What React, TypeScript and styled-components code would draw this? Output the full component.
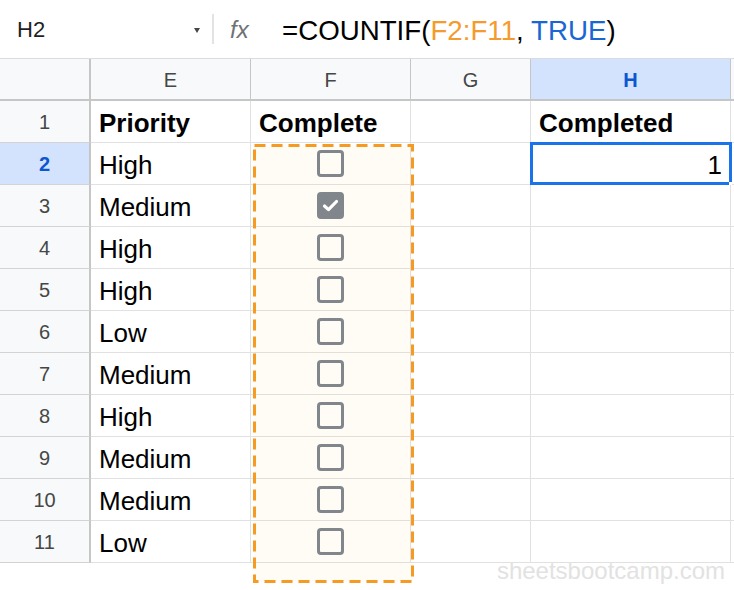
import React from "react";
import styled, { createGlobalStyle, css } from "styled-components";

const GlobalStyle = createGlobalStyle`
  html, body { margin: 0; padding: 0; background: #ffffff; }
  body { font-family: "Liberation Sans", Arial, sans-serif; }
  * { box-sizing: border-box; }
`;

const Page = styled.div`
  position: relative;
  width: 734px;
  height: 590px;
  overflow: hidden;
  background: #ffffff;
`;

const FormulaBar = styled.div`
  display: flex;
  align-items: center;
  height: 59px;
  border-bottom: 1px solid #dadce0;
`;

const NameBox = styled.div`
  width: 212px;
  display: flex;
  align-items: center;
  justify-content: space-between;
  padding: 2px 12px 0 17px;
  font-size: 22px;
  color: #1f1f1f;
`;

const Caret = styled.span`
  width: 0;
  height: 0;
  border-left: 3.5px solid transparent;
  border-right: 3.5px solid transparent;
  border-top: 5px solid #444746;
  margin-top: 0px;
`;

const Divider = styled.div`
  width: 2px;
  height: 30px;
  background: #e3e3e3;
`;

const Fx = styled.span`
  width: 68px;
  padding-left: 16px;
  padding-top: 2px;
  font-size: 24px;
  font-style: italic;
  color: #6f7275;
`;

const Formula = styled.span`
  font-size: 27.7px;
  color: #000000;
  margin-top: 4px;
`;

const Range = styled.span`
  color: #f59b2e;
`;

const Bool = styled.span`
  color: #1a66d2;
`;

const Grid = styled.div`
  display: grid;
  grid-template-columns: 91px 160px 160px 120px 200px 1fr;
  grid-auto-rows: 42px;
`;

const HeaderCell = styled.div<{ $active?: boolean; $rowHead?: boolean }>`
  display: flex;
  align-items: center;
  justify-content: center;
  background: ${(p) => (p.$active ? "#d3e3fd" : "#f8f9fa")};
  color: ${(p) => (p.$active ? "#0b57d0" : "#444746")};
  font-weight: ${(p) => (p.$active ? 700 : 400)};
  font-size: 20px;
  border-right: ${(p) => (p.$rowHead ? "2px solid #c4c7c5" : "1px solid #c4c7c5")};
  border-bottom: 2px solid #c4c7c5;
  padding-top: 2px;
`;

const RowHead = styled.div<{ $active?: boolean }>`
  display: flex;
  align-items: center;
  justify-content: center;
  background: ${(p) => (p.$active ? "#d3e3fd" : "#f8f9fa")};
  color: ${(p) => (p.$active ? "#0b57d0" : "#444746")};
  font-weight: ${(p) => (p.$active ? 700 : 400)};
  font-size: 20px;
  padding-top: 2px;
  border-right: 2px solid #c4c7c5;
  border-bottom: 1px solid #d3d3d3;
`;

const Cell = styled.div<{ $bold?: boolean; $align?: "left" | "center" | "right"; $selected?: boolean }>`
  position: relative;
  display: flex;
  align-items: center;
  justify-content: ${(p) =>
    p.$align === "center" ? "center" : p.$align === "right" ? "flex-end" : "flex-start"};
  padding: 3px 8px 0 8px;
  font-size: 26px;
  font-weight: ${(p) => (p.$bold ? 700 : 400)};
  color: #000000;
  border-right: 1px solid #e1e1e1;
  border-bottom: 1px solid #e1e1e1;
  white-space: nowrap;
  ${(p) =>
    p.$selected &&
    css`
      &::after {
        content: "";
        position: absolute;
        top: -1px;
        left: -1px;
        right: -2px;
        bottom: -1px;
        border: 3px solid #1a73e8;
        pointer-events: none;
      }
      &::before {
        content: "";
        position: absolute;
        right: -2px;
        bottom: -1px;
        width: 3px;
        height: 3px;
        background: #ffffff;
        z-index: 2;
      }
    `}
`;

const Box = styled.span<{ $checked?: boolean }>`
  position: relative;
  z-index: 3;
  width: 27px;
  height: 27px;
  border-radius: 4px;
  border: 3.5px solid #80868b;
  background: ${(p) => (p.$checked ? "#80868b" : "transparent")};
  display: flex;
  align-items: center;
  justify-content: center;
  margin-top: -4px;
`;

const DashedOverlay = styled.svg`
  position: absolute;
  left: 253px;
  top: 144px;
  width: 161px;
  height: 439px;
  pointer-events: none;
  z-index: 1;
`;

const Watermark = styled.div`
  position: absolute;
  right: 9px;
  bottom: 5px;
  font-size: 24px;
  color: #e2e2e2;
  z-index: 2;
`;

const rows: { p: string; c: boolean }[] = [
  { p: "High", c: false },
  { p: "Medium", c: true },
  { p: "High", c: false },
  { p: "High", c: false },
  { p: "Low", c: false },
  { p: "Medium", c: false },
  { p: "High", c: false },
  { p: "Medium", c: false },
  { p: "Medium", c: false },
  { p: "Low", c: false },
];

function CheckBox({ checked }: { checked: boolean }) {
  return (
    <Box $checked={checked}>
      {checked && (
        <svg width="19" height="19" viewBox="0 0 19 19">
          <path
            d="M3.5 10 L7.5 13.6 L15.5 5.5"
            fill="none"
            stroke="#ffffff"
            strokeWidth="3.2"
            strokeLinecap="round"
            strokeLinejoin="round"
          />
        </svg>
      )}
    </Box>
  );
}

export default function App() {
  return (
    <Page>
      <GlobalStyle />
      <FormulaBar>
        <NameBox>
          <span>H2</span>
          <Caret />
        </NameBox>
        <Divider />
        <Fx>fx</Fx>
        <Formula>
          =COUNTIF(<Range>F2:F11</Range>, <Bool>TRUE</Bool>)
        </Formula>
      </FormulaBar>
      <Grid>
        <HeaderCell $rowHead />
        <HeaderCell>E</HeaderCell>
        <HeaderCell>F</HeaderCell>
        <HeaderCell>G</HeaderCell>
        <HeaderCell $active>H</HeaderCell>
        <HeaderCell />

        <RowHead>1</RowHead>
        <Cell $bold>Priority</Cell>
        <Cell $bold>Complete</Cell>
        <Cell />
        <Cell $bold>Completed</Cell>
        <Cell />

        {rows.map((r, i) => (
          <React.Fragment key={i}>
            <RowHead $active={i === 0}>{i + 2}</RowHead>
            <Cell>{r.p}</Cell>
            <Cell $align="center">
              <CheckBox checked={r.c} />
            </Cell>
            <Cell />
            {i === 0 ? (
              <Cell $align="right" $selected>
                1
              </Cell>
            ) : (
              <Cell />
            )}
            <Cell />
          </React.Fragment>
        ))}
      </Grid>
      <DashedOverlay viewBox="0 0 161 439">
        <rect
          x="1.5"
          y="1.5"
          width="158"
          height="436"
          fill="rgba(255, 170, 60, 0.05)"
          stroke="#f59a23"
          strokeWidth="3"
          strokeDasharray="11 6"
        />
      </DashedOverlay>
      <Watermark>sheetsbootcamp.com</Watermark>
    </Page>
  );
}
